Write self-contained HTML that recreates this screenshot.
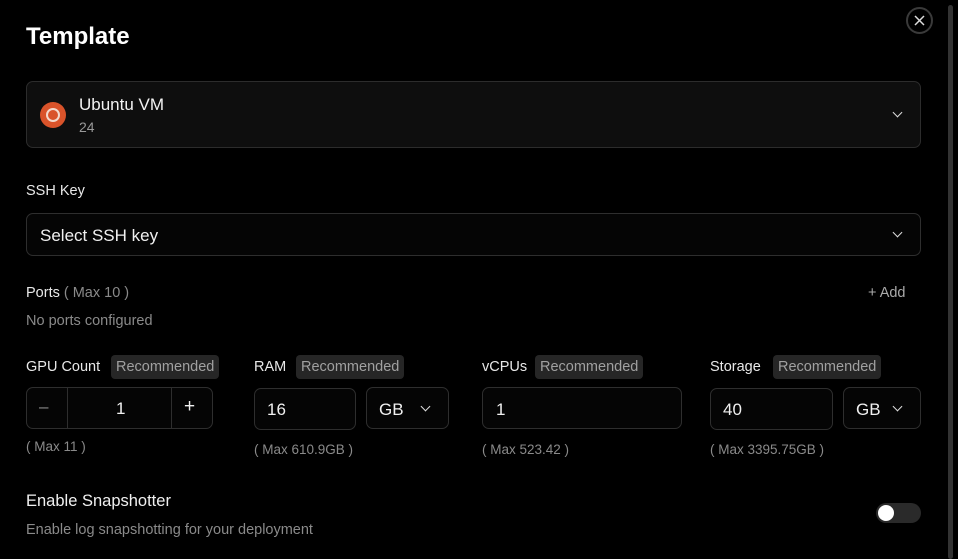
<!DOCTYPE html><html><head><style>
*{box-sizing:border-box;margin:0;padding:0}
body{width:958px;height:559px;background:#000;color:#eee;font-family:"Liberation Sans",sans-serif;position:relative;overflow:hidden}
.a{position:absolute}
.box{position:absolute;border:1px solid #2e2e2e;border-radius:7px;background:#050505}
.lbl{position:absolute;font-size:14.5px;color:#e8e8e8}
.sub{position:absolute;font-size:13.5px;color:#8a8a8a}
.badge{position:absolute;top:355px;height:24px;background:#262626;border-radius:4px;color:#a0a0a0;font-size:14.5px;line-height:24px;padding:0 5px}
.val{position:absolute;font-size:17px;color:#f0f0f0}
.chev{position:absolute;width:7px;height:7px;border-right:1.5px solid #ddd;border-bottom:1.5px solid #ddd;transform:rotate(45deg)}
</style></head><body>
<div class="a" style="left:948px;top:5px;width:5px;height:554px;background:#333;border-radius:3px"></div>
<div class="a" style="left:906px;top:7px;width:27px;height:27px;border:2px solid #3a3a3a;border-radius:50%"></div>
<svg class="a" style="left:913px;top:14px" width="13" height="13"><path d="M2 2L11 11M11 2L2 11" stroke="#ddd" stroke-width="1.5"/></svg>
<div class="a" style="left:26px;top:23px;font-size:24px;font-weight:bold;color:#fff">Template</div>
<div class="box" style="left:26px;top:81px;width:895px;height:67px;background:#0e0e0e;border-color:#2c2c2c"></div>
<div class="a" style="left:40px;top:102px;width:26px;height:26px;border-radius:50%;background:#d9532a">
<div class="a" style="left:6px;top:6px;width:14px;height:14px;border:2.5px solid #f3d9cc;border-radius:50%"></div></div>
<div class="a" style="left:79px;top:95px;font-size:17px;color:#f2f2f2">Ubuntu VM</div>
<div class="a" style="left:79px;top:119px;font-size:14px;color:#999">24</div>
<div class="chev" style="left:894px;top:109px"></div>
<div class="lbl" style="left:26px;top:183px">SSH Key</div>
<div class="box" style="left:26px;top:213px;width:895px;height:43px"></div>
<div class="val" style="left:40px;top:226px">Select SSH key</div>
<div class="chev" style="left:894px;top:229px"></div>
<div class="lbl" style="left:26px;top:285px">Ports <span style="color:#8a8a8a">( Max 10 )</span></div>
<div class="lbl" style="left:868px;top:285px;color:#aaa">+ Add</div>
<div class="sub" style="left:26px;top:313px;font-size:14.5px">No ports configured</div>
<div class="lbl" style="left:26px;top:359px">GPU Count</div><div class="badge" style="left:111px">Recommended</div>
<div class="lbl" style="left:254px;top:359px">RAM</div><div class="badge" style="left:296px">Recommended</div>
<div class="lbl" style="left:482px;top:359px">vCPUs</div><div class="badge" style="left:535px">Recommended</div>
<div class="lbl" style="left:710px;top:359px">Storage</div><div class="badge" style="left:773px">Recommended</div>
<div class="box" style="left:26px;top:387px;width:187px;height:42px"></div>
<div class="a" style="left:67px;top:387px;width:1px;height:42px;background:#2e2e2e"></div>
<div class="a" style="left:171px;top:387px;width:1px;height:42px;background:#2e2e2e"></div>
<div class="val" style="left:39px;top:397px;color:#888">–</div>
<div class="val" style="left:116px;top:399px">1</div>
<div class="val" style="left:184px;top:396px;font-size:19px">+</div>
<div class="box" style="left:254px;top:388px;width:102px;height:42px"></div>
<div class="val" style="left:267px;top:400px">16</div>
<div class="box" style="left:366px;top:387px;width:83px;height:42px"></div>
<div class="val" style="left:379px;top:400px">GB</div><div class="chev" style="left:422px;top:403px"></div>
<div class="box" style="left:482px;top:387px;width:200px;height:42px"></div>
<div class="val" style="left:496px;top:400px">1</div>
<div class="box" style="left:710px;top:388px;width:123px;height:42px"></div>
<div class="val" style="left:723px;top:400px">40</div>
<div class="box" style="left:843px;top:387px;width:78px;height:42px"></div>
<div class="val" style="left:856px;top:400px">GB</div><div class="chev" style="left:894px;top:403px"></div>
<div class="sub" style="left:26px;top:439px">( Max 11 )</div>
<div class="sub" style="left:254px;top:442px">( Max 610.9GB )</div>
<div class="sub" style="left:482px;top:442px">( Max 523.42 )</div>
<div class="sub" style="left:710px;top:442px">( Max 3395.75GB )</div>
<div class="a" style="left:26px;top:492px;font-size:16.5px;color:#f0f0f0">Enable Snapshotter</div>
<div class="sub" style="left:26px;top:522px;font-size:14.5px">Enable log snapshotting for your deployment</div>
<div class="a" style="left:876px;top:503px;width:45px;height:20px;border-radius:10px;background:#2a2a2a"><div class="a" style="left:2px;top:2px;width:16px;height:16px;border-radius:50%;background:#fff"></div></div>
</body></html>
